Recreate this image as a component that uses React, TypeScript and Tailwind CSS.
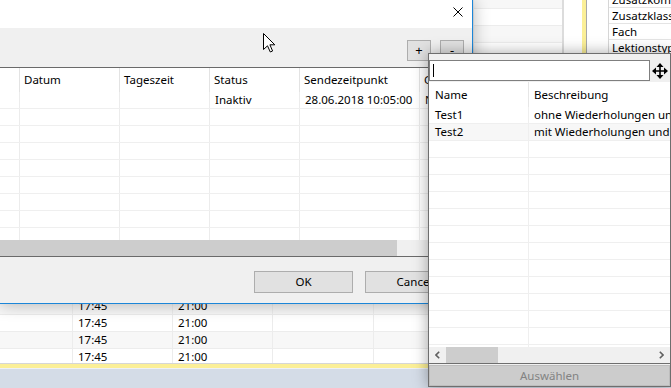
import React from "react";

function XIcon() {
  return (
    <svg width="10" height="10" viewBox="0 0 10 10">
      <path d="M0.5 0.5 L9.5 9.5 M9.5 0.5 L0.5 9.5" stroke="#000" strokeWidth="1" />
    </svg>
  );
}

function MoveIcon() {
  return (
    <svg width="16" height="16" viewBox="0 0 16 16">
      <path d="M8 3 V13 M3 8 H13" stroke="#000" strokeWidth="1.6" />
      <path d="M8 0 L4.5 4 H11.5 Z M8 16 L4.5 12 H11.5 Z M0 8 L4 4.5 V11.5 Z M16 8 L12 4.5 V11.5 Z" fill="#000" />
    </svg>
  );
}

function Chevron({ dir }: { dir: "l" | "r" }) {
  return (
    <svg width="5" height="8" viewBox="0 0 5 8">
      <path
        d={dir === "l" ? "M4.2 0.8 L1 4 L4.2 7.2" : "M0.8 0.8 L4 4 L0.8 7.2"}
        stroke="#606060"
        strokeWidth="1.6"
        fill="none"
      />
    </svg>
  );
}

function Cursor() {
  return (
    <svg className="absolute left-[263px] top-[33px]" width="13" height="20" viewBox="0 0 13 20">
      <path
        d="M0.5 0.5 L0.5 16.5 L4.5 12.8 L7.3 19 L9.6 18 L6.9 11.8 L11.8 11.8 Z"
        fill="#fff"
        stroke="#000"
        strokeWidth="1"
        strokeLinejoin="miter"
      />
    </svg>
  );
}

function Background() {
  const rows = Array.from({ length: 22 }, (_, i) => i);
  const right = ["Zusatzkomponente", "Zusatzklasse", "Fach", "Lektionstyp", "", "", "", "", "", "", "", "", "", "", "", "", "", "", "", "", "", "", ""];
  return (
    <div className="absolute inset-0 flex flex-col">
      <div className="flex h-[364px] shrink-0 border-b border-[#d6d6d6]">
        <div className="w-[564px] shrink-0 overflow-hidden border-r-2 border-[#dcdcdc]">
          <div className="-mt-[8px]">
            {rows.map((i) => (
              <div
                key={i}
                className={`flex h-[17px] border-b border-[#ececec] ${i % 2 === 0 ? "bg-[#f7f7f7]" : "bg-white"}`}
              >
                <div className="w-[73px] shrink-0 border-r border-[#ececec]" />
                <div className="w-[100px] shrink-0 border-r border-[#ececec] pl-[5px] flex items-center">{i >= 18 ? "17:45" : ""}</div>
                <div className="w-[100px] shrink-0 border-r border-[#ececec] pl-[5px] flex items-center">{i >= 18 ? "21:00" : ""}</div>
                <div className="w-[101px] shrink-0 border-r border-[#ececec]" />
                <div className="w-[100px] shrink-0 border-r border-[#ececec]" />
                <div className="flex-1" />
              </div>
            ))}
          </div>
        </div>
        <div className="w-[18px] shrink-0 bg-white" />
        <div className="w-[4px] shrink-0 bg-[#fbef97]" />
        <div className="w-px shrink-0 bg-[#a8a8a8]" />
        <div className="w-[21px] shrink-0 bg-white" />
        <div className="flex-1 overflow-hidden border-l border-[#d6d6d6] bg-white">
          <div className="-mt-[8px]">
            {right.map((t, i) => (
              <div key={i} className="h-[16px] border-b border-[#e4e4e4] pl-[3px] flex items-center whitespace-nowrap">
                {t}
              </div>
            ))}
          </div>
        </div>
      </div>
      <div className="h-[4px] shrink-0 bg-[#fbef97]" />
      <div className="h-px shrink-0 bg-[#eef1f5]" />
      <div className="flex-1 bg-[#d4dce7]" />
    </div>
  );
}

function Dialog() {
  const dataRows = Array.from({ length: 9 }, (_, i) => i);
  return (
    <div className="absolute left-0 top-0 w-[473px] h-[304px] flex flex-col bg-[#f0f0f0] border-r border-b border-[#1c86d8] shadow-[0_0_16px_rgba(0,0,0,0.3)]">
      <div className="h-[28px] shrink-0 bg-white flex items-start justify-end pt-[7px] pr-[9px]">
        <XIcon />
      </div>
      <div className="h-[39px] shrink-0 flex items-start justify-end pt-[12px] pr-[8px] gap-[9px]">
        <div className="w-[24px] h-[21px] bg-[#e1e1e1] border border-[#adadad] flex items-center justify-center text-[13px]">+</div>
        <div className="w-[24px] h-[21px] bg-[#e1e1e1] border border-[#adadad] flex items-center justify-center text-[13px]">-</div>
      </div>
      <div className="border-t border-[#6a6a6a] bg-white flex flex-col">
        <div className="h-[24px] flex whitespace-nowrap">
          <div className="w-[20px] shrink-0 border-r border-[#e3e3e3]" />
          <div className="w-[100px] shrink-0 border-r border-[#e3e3e3] pl-[4px] flex items-center">Datum</div>
          <div className="w-[90px] shrink-0 border-r border-[#e3e3e3] pl-[4px] flex items-center">Tageszeit</div>
          <div className="w-[90px] shrink-0 border-r border-[#e3e3e3] pl-[4px] flex items-center">Status</div>
          <div className="w-[120px] shrink-0 border-r border-[#e3e3e3] pl-[4px] flex items-center">Sendezeitpunkt</div>
          <div className="flex-1 overflow-hidden pl-[4px] flex items-center">Gesendet</div>
        </div>
        <div className="h-[148px] overflow-hidden">
          {dataRows.map((i) => (
            <div key={i} className="h-[17px] flex border-b border-[#efefef] whitespace-nowrap">
              <div className="w-[20px] shrink-0 border-r border-[#ececec]" />
              <div className="w-[100px] shrink-0 border-r border-[#ececec]" />
              <div className="w-[90px] shrink-0 border-r border-[#ececec]" />
              <div className="w-[90px] shrink-0 border-r border-[#ececec] pl-[5px] flex items-center">{i === 0 ? "Inaktiv" : ""}</div>
              <div className="w-[120px] shrink-0 border-r border-[#ececec] pl-[5px] flex items-center">{i === 0 ? "28.06.2018 10:05:00" : ""}</div>
              <div className="flex-1 overflow-hidden pl-[5px] flex items-center">{i === 0 ? "Nein" : ""}</div>
            </div>
          ))}
        </div>
      </div>
      <div className="h-[16px] shrink-0 flex bg-[#f0f0f0]">
        <div className="w-[397px] bg-[#cdcdcd]" />
      </div>
      <div className="h-px shrink-0 bg-[#6a6a6a]" />
      <div className="flex-1 flex items-start justify-end pt-[14px] pr-[8px] gap-[12px]">
        <div className="w-[99px] h-[22px] bg-[#e1e1e1] border border-[#adadad] flex items-center justify-center">OK</div>
        <div className="w-[99px] h-[22px] bg-[#e1e1e1] border border-[#adadad] flex items-center justify-center">Cancel</div>
      </div>
    </div>
  );
}

function Popup() {
  const rows = Array.from({ length: 15 }, (_, i) => i);
  const data: [string, string][] = [
    ["Test1", "ohne Wiederholungen und Erinnerung"],
    ["Test2", "mit Wiederholungen und Erinnerung"],
  ];
  return (
    <div className="absolute left-[428px] top-[53px] w-[243px] h-[334px] flex flex-col bg-[#f0f0f0] border border-[#6e6e6e] shadow-[0_0_14px_rgba(0,0,0,0.35)]">
      <div className="pt-[6px] flex shrink-0">
        <div className="w-[221px] h-[21px] bg-white border border-[#7f7f7f] pl-[3px] flex items-center">
          <div className="w-px h-[13px] bg-black" />
        </div>
        <div className="flex-1 flex items-center justify-center">
          <MoveIcon />
        </div>
      </div>
      <div className="mt-[1px] h-[25px] shrink-0 bg-white flex whitespace-nowrap">
        <div className="w-[100px] shrink-0 border-r border-[#e6e6e6] pl-[6px] flex items-center">Name</div>
        <div className="flex-1 overflow-hidden pl-[5px] flex items-center">Beschreibung</div>
      </div>
      <div className="h-[240px] shrink-0 overflow-hidden bg-white">
        {rows.map((i) => (
          <div
            key={i}
            className={`h-[17px] flex border-b border-[#efefef] whitespace-nowrap ${i === 1 ? "bg-[#f7f7f7]" : ""}`}
          >
            <div className="w-[100px] shrink-0 border-r border-[#efefef] pl-[6px] flex items-center">{data[i]?.[0] ?? ""}</div>
            <div className="flex-1 overflow-hidden pl-[5px] flex items-center">{data[i]?.[1] ?? ""}</div>
          </div>
        ))}
      </div>
      <div className="h-[16px] shrink-0 flex bg-[#f0f0f0]">
        <div className="w-[17px] flex items-center justify-center">
          <Chevron dir="l" />
        </div>
        <div className="w-[52px] bg-[#cdcdcd]" />
        <div className="flex-1" />
        <div className="w-[17px] flex items-center justify-center">
          <Chevron dir="r" />
        </div>
      </div>
      <div className="h-px shrink-0 bg-[#6e6e6e]" />
      <div className="h-px shrink-0" />
      <div className="h-[21px] shrink-0 bg-[#cccccc] border border-[#bdbdbd] flex items-center justify-center text-[#838383]">
        Auswählen
      </div>
    </div>
  );
}

export default function App() {
  return (
    <div className="relative w-[671px] h-[388px] overflow-hidden bg-white text-[11.5px] leading-none text-black font-['Noto_Sans',sans-serif]">
      <Background />
      <Dialog />
      <Popup />
      <Cursor />
    </div>
  );
}
